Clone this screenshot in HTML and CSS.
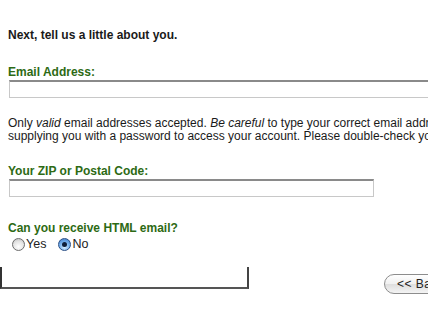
FILE: index.html
```html
<!DOCTYPE html>
<html>
<head>
<meta charset="utf-8">
<link rel="stylesheet" href="styles.css">
</head>
<body>
<div class="page">
  <div class="form">
    <p class="intro">Next, tell us a little about you.</p>
    <label class="label label-email">Email Address:</label>
    <div class="field field-email"></div>
    <p class="note">Only <i>valid</i> email addresses accepted. <i>Be careful</i> to type your correct email address, as we will be<br>supplying you with a password to access your account. Please double-check your entry.</p>
    <label class="label label-zip">Your ZIP or Postal Code:</label>
    <div class="field field-zip"></div>
    <label class="label label-html">Can you receive HTML email?</label>
    <div class="radios">
      <span class="radio"></span><span class="rtext">Yes</span>
      <span class="radio radio-on"><span class="dot"></span></span><span class="rtext">No</span>
    </div>
  </div>
  <div class="footer">
    <div class="box"></div>
    <div class="btn">&lt;&lt; Back</div>
  </div>
</div>
</body>
</html>
```
FILE: styles.css
```css
html, body {
  margin: 0;
  padding: 0;
  background: #fff;
  overflow: hidden;
}
.page {
  width: 900px;
  font-family: "Liberation Sans", Arial, sans-serif;
  font-size: 12px;
  line-height: 13px;
  color: #111;
}
.form {
  padding: 29px 0 0 8px;
}
.intro {
  margin: 0;
  font-weight: bold;
  color: #1a1a1a;
}
.label {
  display: block;
  font-weight: bold;
  color: #2d6a14;
  font-size: 12px;
  line-height: 14px;
}
.label-email {
  margin-top: 23px;
}
.field {
  box-sizing: border-box;
  height: 18px;
  margin-top: 1px;
  background: #fff;
  border: 1px solid #c8c8c8;
  border-top: 2px solid #8a8a8a;
  margin-left: 1px;
}
.field-email {
  width: 600px;
}
.field-zip {
  width: 365px;
}
.note {
  margin: 19px 0 0 0;
  color: #1a1a1a;
  white-space: nowrap;
}
.label-zip {
  margin-top: 21px;
}
.label-html {
  margin-top: 24px;
}
.radios {
  display: flex;
  align-items: center;
  margin-top: 3px;
  padding-left: 4px;
  font-size: 12.5px;
}
.radio {
  box-sizing: border-box;
  width: 13px;
  height: 13px;
  border-radius: 50%;
  border: 1px solid #6d6d6d;
  background: radial-gradient(circle at 50% 70%, #ffffff 0%, #e4e4e4 55%, #b8b8b8 100%);
  display: flex;
  align-items: center;
  justify-content: center;
}
.radio-on {
  border-color: #2a4f86;
  background: radial-gradient(circle at 50% 75%, #d6ecff 0%, #77b2ee 50%, #3b78c6 100%);
  margin-left: 12px;
}
.dot {
  width: 5px;
  height: 5px;
  border-radius: 50%;
  background: #0d1e3a;
}
.rtext {
  margin-left: 1px;
  color: #222;
}
.footer {
  display: flex;
  align-items: flex-start;
  margin-top: 16px;
}
.box {
  box-sizing: border-box;
  width: 249px;
  height: 22px;
  border-left: 2px solid #333;
  border-right: 2px solid #444;
  border-bottom: 2px solid #555;
}
.btn {
  box-sizing: border-box;
  margin-left: 135px;
  margin-top: 7px;
  height: 20px;
  width: 90px;
  border: 1px solid #8d8d8d;
  border-radius: 10px;
  background: linear-gradient(#ffffff, #f0f0f0 50%, #dedede 51%, #f4f4f4);
  font-size: 12px;
  line-height: 18px;
  padding-left: 12px;
  color: #222;
  letter-spacing: 0.5px;
}
```
